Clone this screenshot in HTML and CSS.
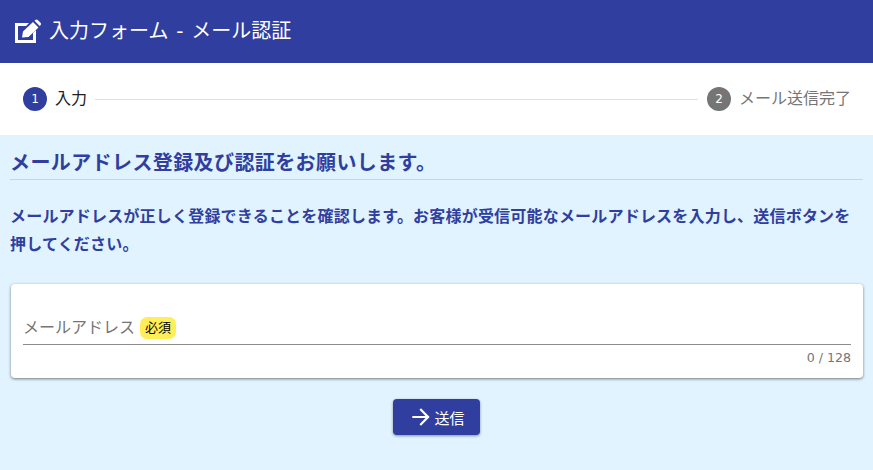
FILE: index.html
```html
<!DOCTYPE html>
<html lang="ja">
<head>
<meta charset="utf-8">
<title>入力フォーム - メール認証</title>
<link rel="stylesheet" href="styles.css">
</head>
<body>
<header class="appbar">
  <svg class="edit-icon" viewBox="0 0 28 25" width="28" height="25"><path d="M0 4h14l-3 3H3v14h15v-7l3-3v13H0z"/><path d="M7 18.500l1-6L18 3l5.500 5.500L13.500 18zM19.500 1.800l.8-.8c.7-.7 1.700-.7 2.400 0l2.800 2.800c.7.7.7 1.700 0 2.400l-.8.8z"/></svg>
  <h1 class="appbar-title">入力フォーム - メール認証</h1>
</header>
<nav class="stepper">
  <span class="step-num active">1</span>
  <span class="step-label active">入力</span>
  <span class="step-line"></span>
  <span class="step-num">2</span>
  <span class="step-label">メール送信完了</span>
</nav>
<main class="content">
  <h2 class="heading">メールアドレス登録及び認証をお願いします。</h2>
  <p class="lead">メールアドレスが正しく登録できることを確認します。お客様が受信可能なメールアドレスを入力し、送信ボタンを押してください。</p>
  <section class="card">
    <div class="field">
      <span class="field-label">メールアドレス</span>
      <span class="badge">必須</span>
    </div>
    <div class="counter">0 / 128</div>
  </section>
  <div class="actions">
    <button class="submit" type="button">
      <svg viewBox="0 0 24 24" width="26" height="26"><path d="M12 4l-1.410 1.410L16.170 11H4v2h12.170l-5.580 5.590L12 20l8-8z"/></svg>
      <span>送信</span>
    </button>
  </div>
</main>
</body>
</html>
```
FILE: styles.css
```css
* { box-sizing: border-box; }
html, body { margin: 0; padding: 0; }
body {
  width: 873px;
  height: 470px;
  overflow: hidden;
  background: #e0f3fe;
  font-family: "DejaVu Sans", "Noto Sans CJK JP", sans-serif;
}
.appbar {
  height: 63px;
  background: #303f9f;
  color: #fff;
  display: flex;
  align-items: center;
  padding-left: 15px;
  gap: 6px;
}
.edit-icon { fill: #fff; flex: none; margin-top: -1px; }
.appbar-title { margin: 0 0 1px; font-size: 20px; font-weight: 400; line-height: 1; word-spacing: 1.5px; }
.stepper {
  height: 72px;
  background: #fff;
  display: flex;
  align-items: center;
  padding: 0 22px 0 23px;
}
.step-num {
  width: 24px;
  height: 24px;
  border-radius: 50%;
  background: #757575;
  color: #fff;
  font-size: 12px;
  display: flex;
  align-items: center;
  justify-content: center;
  flex: none;
}
.step-num.active { background: #303f9f; }
.step-label { margin-left: 8px; font-size: 16px; color: #757575; line-height: 24px; }
.step-label.active { color: #212121; }
.step-line { flex: 1; height: 1px; background: #e0e0e0; margin: 0 9px 0 8px; }
.content { padding: 0 10px; }
.heading {
  margin: 0;
  padding: 13px 0 0 0;
  height: 45px;
  font-size: 20px;
  line-height: 30px;
  font-weight: 700;
  letter-spacing: .4px;
  color: #303f9f;
  border-bottom: 1px solid #c3d7e6;
}
.lead {
  margin: 23px 0 0;
  padding: 0;
  font-size: 16px;
  line-height: 28px;
  font-weight: 700;
  letter-spacing: .2px;
  color: #303f9f;
}
.card {
  margin: 25px 0 0 1px;
  height: 94px;
  background: #fff;
  border-radius: 4px;
  box-shadow: 0 1px 3px rgba(0,0,0,.5);
  padding: 0 12px;
}
.field {
  height: 61px;
  border-bottom: 1px solid #8c8c8c;
  display: flex;
  align-items: flex-end;
  padding-bottom: 4px;
}
.field-label { font-size: 16px; line-height: 24px; color: #757575; }
.badge {
  margin-left: 5px;
  margin-bottom: 1px;
  height: 22px;
  width: 36px;
  border-radius: 7px;
  background: #ffee58;
  color: #000;
  font-size: 13px;
  line-height: 22px;
  text-align: center;
}
.counter {
  text-align: right;
  font-size: 12.6px;
  line-height: 14px;
  padding-top: 6px;
  color: #757575;
}
.actions { display: flex; justify-content: center; margin-top: 21px; }
.submit {
  width: 87px;
  height: 36px;
  border: 0;
  border-radius: 4px;
  background: #303f9f;
  color: #fff;
  font-family: inherit;
  font-size: 15px;
  display: flex;
  align-items: center;
  justify-content: center;
  gap: 0;
  padding: 0;
  box-shadow: 0 1px 3px rgba(0,0,0,.4);
}
.submit svg { fill: #fff; flex: none; }
```
